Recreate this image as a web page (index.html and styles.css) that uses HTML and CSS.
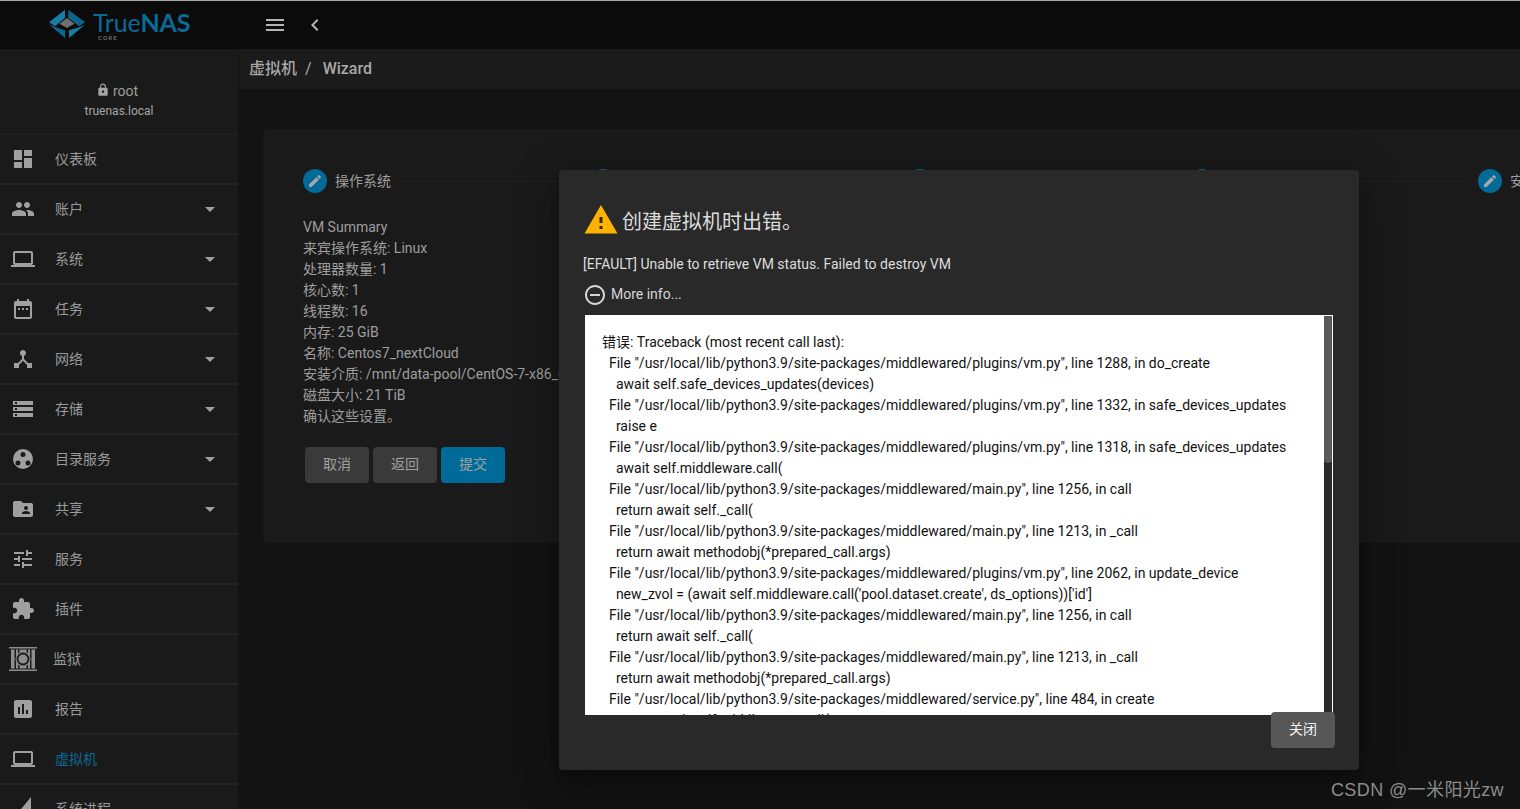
FILE: index.html
```html
<!DOCTYPE html>
<html lang="zh-CN">
<head>
<meta charset="utf-8">
<title>TrueNAS - 虚拟机 Wizard</title>
<link rel="stylesheet" href="styles.css">
</head>
<body>
<div class="app">
  <header class="topbar">
    <div class="brand">
      <svg class="brand-mark" viewBox="0 0 36 30" aria-hidden="true">
        <polygon class="seg-a" points="16,0.700 0,13.300 6,17.300 16,9"/>
        <polygon class="seg-b" points="19.300,0.700 36,13.300 30,17.300 19.300,9"/>
        <polygon class="seg-b" points="0.300,15.700 16,29 16,21.300 6,18"/>
        <polygon class="seg-a" points="36,15.700 20,29 20,21.300 31,18"/>
        <polygon class="seg-c" points="18,9 25.500,14.700 18,19 10.300,14.700"/>
      </svg>
      <div class="brand-text">
        <div class="brand-name">True<b>NAS</b></div>
        <div class="brand-sub">CORE</div>
      </div>
    </div>
    <svg class="top-icon" viewBox="0 0 24 24"><path d="M3 18h18v-2H3v2zm0-5h18v-2H3v2zm0-7v2h18V6H3z"/></svg>
    <svg class="top-icon back" viewBox="0 0 24 24"><path d="M15.410 7.410L14 6l-6 6 6 6 1.410-1.410L10.830 12z"/></svg>
  </header>
  <div class="shell">
    <nav class="sidebar">
      <div class="user">
        <div class="user-name"><svg class="lock" viewBox="0 0 24 24"><path d="M18 8h-1V6c0-2.760-2.240-5-5-5S7 3.240 7 6v2H6c-1.100 0-2 .9-2 2v10c0 1.100.9 2 2 2h12c1.100 0 2-.9 2-2V10c0-1.100-.9-2-2-2zm-6 9c-1.100 0-2-.9-2-2s.9-2 2-2 2 .9 2 2-.9 2-2 2zm3.100-9H8.900V6c0-1.710 1.390-3.100 3.100-3.100 1.710 0 3.100 1.390 3.100 3.100v2z"/></svg>root</div>
        <div class="user-host">truenas.local</div>
      </div>
      <a class="nav-item"><svg class="nav-icon" viewBox="0 0 24 24"><path d="M3 13h8V3H3v10zm0 8h8v-6H3v6zm10 0h8V11h-8v10zm0-18v6h8V3h-8z"/></svg><span>仪表板</span></a>
      <a class="nav-item has-sub"><svg class="nav-icon" viewBox="0 0 24 24"><path d="M16 11c1.660 0 2.990-1.340 2.990-3S17.660 5 16 5c-1.660 0-3 1.340-3 3s1.340 3 3 3zm-8 0c1.660 0 2.990-1.340 2.990-3S9.660 5 8 5C6.340 5 5 6.340 5 8s1.340 3 3 3zm0 2c-2.330 0-7 1.170-7 3.500V19h14v-2.500c0-2.330-4.670-3.500-7-3.500zm8 0c-.29 0-.62.02-.97.05 1.160.84 1.970 1.970 1.970 3.450V19h6v-2.500c0-2.330-4.670-3.500-7-3.500z"/></svg><span>账户</span></a>
      <a class="nav-item has-sub"><svg class="nav-icon" viewBox="0 0 24 24"><path d="M20 18c1.100 0 1.990-.9 1.990-2L22 6c0-1.100-.9-2-2-2H4c-1.100 0-2 .9-2 2v10c0 1.100.9 2 2 2H0v2h24v-2h-4zM4 6h16v10H4V6z"/></svg><span>系统</span></a>
      <a class="nav-item has-sub"><svg class="nav-icon" viewBox="0 0 24 24"><path d="M9 11H7v2h2v-2zm4 0h-2v2h2v-2zm4 0h-2v2h2v-2zm2-7h-1V2h-2v2H8V2H6v2H5c-1.110 0-1.990.9-1.990 2L3 20c0 1.100.89 2 2 2h14c1.100 0 2-.9 2-2V6c0-1.100-.9-2-2-2zm0 16H5V9h14v11z"/></svg><span>任务</span></a>
      <a class="nav-item has-sub"><svg class="nav-icon" viewBox="0 0 24 24"><path d="M17 16l-4-4V8.820C14.160 8.400 15 7.300 15 6c0-1.660-1.340-3-3-3S9 4.340 9 6c0 1.300.84 2.400 2 2.820V12l-4 4H3v5h5v-3.050l4-4.200 4 4.200V21h5v-5h-4z"/></svg><span>网络</span></a>
      <a class="nav-item has-sub"><svg class="nav-icon" viewBox="0 0 24 24"><path d="M2 20h20v-4H2v4zm2-3h2v2H4v-2zM2 4v4h20V4H2zm4 3H4V5h2v2zm-4 7h20v-4H2v4zm2-3h2v2H4v-2z"/></svg><span>存储</span></a>
      <a class="nav-item has-sub"><svg class="nav-icon" viewBox="0 0 24 24"><path fill-rule="evenodd" d="M12 2a10 10 0 1 0 0 20a10 10 0 1 0 0-20zM12 5a2.500 2.500 0 1 1 0 5a2.500 2.500 0 1 1 0-5zM7 13.500a2.500 2.500 0 1 1 0 5a2.500 2.500 0 1 1 0-5zM17 13.500a2.500 2.500 0 1 1 0 5a2.500 2.500 0 1 1 0-5z"/></svg><span>目录服务</span></a>
      <a class="nav-item has-sub"><svg class="nav-icon" viewBox="0 0 24 24"><path d="M20 6h-8l-2-2H4c-1.100 0-1.990.9-1.990 2L2 18c0 1.100.9 2 2 2h16c1.100 0 2-.9 2-2V8c0-1.100-.9-2-2-2zm-5 3c1.100 0 2 .9 2 2s-.9 2-2 2-2-.9-2-2 .9-2 2-2zm4 8h-8v-1c0-1.330 2.670-2 4-2s4 .67 4 2v1z"/></svg><span>共享</span></a>
      <a class="nav-item"><svg class="nav-icon" viewBox="0 0 24 24"><path d="M3 17v2h6v-2H3zM3 5v2h10V5H3zm10 16v-2h8v-2h-8v-2h-2v6h2zM7 9v2H3v2h4v2h2V9H7zm14 4v-2H11v2h10zm-6-4h2V7h4V5h-4V3h-2v6z"/></svg><span>服务</span></a>
      <a class="nav-item"><svg class="nav-icon" viewBox="0 0 24 24"><path d="M20.500 11H19V7c0-1.100-.9-2-2-2h-4V3.500C13 2.120 11.880 1 10.500 1S8 2.120 8 3.500V5H4c-1.100 0-1.990.9-1.990 2v3.800H3.500c1.490 0 2.700 1.210 2.700 2.700s-1.210 2.700-2.700 2.700H2V20c0 1.100.9 2 2 2h3.800v-1.500c0-1.490 1.210-2.700 2.700-2.700 1.490 0 2.700 1.210 2.700 2.700V22H17c1.100 0 2-.9 2-2v-4h1.500c1.380 0 2.500-1.120 2.500-2.500S21.880 11 20.500 11z"/></svg><span>插件</span></a>
      <a class="nav-item jail"><svg class="jail-icon" viewBox="0 0 28 24"><path class="jail-frame" d="M0 0h28v1.500H0zM0 22.500h28V24H0zM2 2.500h3.500v19H2zM7 2.500h2v19H7zM19 2.500h2v19h-2zM22.500 2.500H26v19h-3.500zM10.500 2.500h7v3h-7zM10.500 18.500h7v3h-7z"/><circle class="jail-ball" cx="14" cy="12" r="7.500"/><circle class="jail-ring" cx="14" cy="12" r="5.500"/></svg><span>监狱</span></a>
      <a class="nav-item"><svg class="nav-icon" viewBox="0 0 24 24"><path d="M19 3H5c-1.100 0-2 .9-2 2v14c0 1.100.9 2 2 2h14c1.100 0 2-.9 2-2V5c0-1.100-.9-2-2-2zM9 17H7v-7h2v7zm4 0h-2V7h2v10zm4 0h-2v-4h2v4z"/></svg><span>报告</span></a>
      <a class="nav-item active"><svg class="nav-icon" viewBox="0 0 24 24"><path d="M20 18c1.100 0 1.990-.9 1.990-2L22 6c0-1.100-.9-2-2-2H4c-1.100 0-2 .9-2 2v10c0 1.100.9 2 2 2H0v2h24v-2h-4zM4 6h16v10H4V6z"/></svg><span>虚拟机</span></a>
      <a class="nav-item"><svg class="nav-icon" viewBox="0 0 24 24"><path d="M2 22h18V0z"/></svg><span>系统进程</span></a>
    </nav>
    <main class="main">
      <div class="crumbs"><span>虚拟机</span><span class="crumb-sep">/</span><span class="crumb-last">Wizard</span></div>
      <section class="card">
        <div class="stepper">
          <div class="step"><span class="step-dot"><svg viewBox="0 0 24 24"><path d="M3 17.250V21h3.750L17.810 9.940l-3.750-3.750L3 17.250zM20.710 7.040c.39-.39.39-1.020 0-1.410l-2.340-2.340c-.39-.39-1.020-.39-1.410 0l-1.830 1.830 3.750 3.750 1.830-1.830z"/></svg></span><span class="step-label">操作系统</span><i class="step-line"></i></div>
          <div class="step"><span class="step-dot"></span><span class="step-label">CPU和内存</span><i class="step-line"></i></div>
          <div class="step"><span class="step-dot"></span><span class="step-label">磁盘</span><i class="step-line"></i></div>
          <div class="step"><span class="step-dot"></span><span class="step-label">网络接口</span><i class="step-line"></i></div>
          <div class="step"><span class="step-dot"><svg viewBox="0 0 24 24"><path d="M3 17.250V21h3.750L17.810 9.940l-3.750-3.750L3 17.250zM20.710 7.040c.39-.39.39-1.020 0-1.410l-2.340-2.340c-.39-.39-1.020-.39-1.410 0l-1.830 1.830 3.750 3.750 1.830-1.830z"/></svg></span><span class="step-label">安装介质</span></div>
        </div>
        <div class="summary">
          <div>VM Summary</div>
          <div>来宾操作系统: Linux</div>
          <div>处理器数量: 1</div>
          <div>核心数: 1</div>
          <div>线程数: 16</div>
          <div>内存: 25 GiB</div>
          <div>名称: Centos7_nextCloud</div>
          <div>安装介质: /mnt/data-pool/CentOS-7-x86_64-Minimal-2009.iso</div>
          <div>磁盘大小: 21 TiB</div>
          <div>确认这些设置。</div>
        </div>
        <div class="actions">
          <button class="btn">取消</button>
          <button class="btn">返回</button>
          <button class="btn primary">提交</button>
        </div>
      </section>
    </main>
  </div>
</div>
<div class="dialog">
  <h1 class="dialog-title"><svg class="warn" viewBox="0 0 24 24"><path d="M1 21h22L12 2 1 21zm12-3h-2v-2h2v2zm0-4h-2v-4h2v4z"/></svg><span>创建虚拟机时出错。</span></h1>
  <p class="dialog-msg">[EFAULT] Unable to retrieve VM status. Failed to destroy VM</p>
  <div class="more"><svg class="more-icon" viewBox="0 0 24 24"><path d="M7 11v2h10v-2H7zm5-9C6.480 2 2 6.480 2 12s4.480 10 10 10 10-4.480 10-10S17.520 2 12 2zm0 18c-4.410 0-8-3.590-8-8s3.590-8 8-8 8 3.590 8 8-3.590 8-8 8z"/></svg><span>More info...</span></div>
  <div class="trace">
    <pre class="trace-text">错误: Traceback (most recent call last):
  File "/usr/local/lib/python3.9/site-packages/middlewared/plugins/vm.py", line 1288, in do_create
    await self.safe_devices_updates(devices)
  File "/usr/local/lib/python3.9/site-packages/middlewared/plugins/vm.py", line 1332, in safe_devices_updates
    raise e
  File "/usr/local/lib/python3.9/site-packages/middlewared/plugins/vm.py", line 1318, in safe_devices_updates
    await self.middleware.call(
  File "/usr/local/lib/python3.9/site-packages/middlewared/main.py", line 1256, in call
    return await self._call(
  File "/usr/local/lib/python3.9/site-packages/middlewared/main.py", line 1213, in _call
    return await methodobj(*prepared_call.args)
  File "/usr/local/lib/python3.9/site-packages/middlewared/plugins/vm.py", line 2062, in update_device
    new_zvol = (await self.middleware.call('pool.dataset.create', ds_options))['id']
  File "/usr/local/lib/python3.9/site-packages/middlewared/main.py", line 1256, in call
    return await self._call(
  File "/usr/local/lib/python3.9/site-packages/middlewared/main.py", line 1213, in _call
    return await methodobj(*prepared_call.args)
  File "/usr/local/lib/python3.9/site-packages/middlewared/service.py", line 484, in create
    return await self.middleware._call(</pre>
    <div class="trace-bar"><div class="trace-thumb"></div></div>
  </div>
  <div class="dialog-actions"><button class="btn close">关闭</button></div>
</div>
<div class="watermark">CSDN @一米阳光zw</div>
</body>
</html>
```

FILE: styles.css
```css
* { box-sizing: border-box; }
html, body { margin: 0; height: 809px; overflow: hidden; }
body {
  background: #131313;
  color: #9e9e9e;
  font: 14px/21px Roboto, "Noto Sans CJK SC", sans-serif;
}
.app { display: flex; flex-direction: column; height: 809px; }

.topbar {
  flex: none;
  height: 49px;
  display: flex;
  align-items: center;
  background: #0b0b0b;
  border-top: 1px solid #a8a8a8;
}
.brand { width: 254px; padding-left: 49px; display: flex; align-items: flex-start; gap: 8px; height: 48px; }
.brand-mark { width: 36px; height: 30px; margin-top: 8px; }
.seg-a { fill: #177ea8; }
.seg-b { fill: #0b668f; }
.seg-c { fill: #6f6f6f; }
.brand-name {
  margin-top: 8px;
  font: 400 25px/26px Lato, sans-serif;
  color: #0a6a96;
  white-space: nowrap;
  letter-spacing: -.2px;
}
.brand-name b { font-weight: 700; }
.brand-sub {
  margin-left: 5px;
  font: 500 6px/5px Roboto, sans-serif;
  letter-spacing: 1.100px;
  color: #7a7a7a;
}
.top-icon { width: 24px; height: 24px; fill: #b5b5b5; margin-left: 9px; }
.top-icon.back { margin-left: 16px; }

.shell { flex: 1; display: flex; min-height: 0; }
.sidebar { flex: none; width: 238px; background: #1a1a1a; overflow: hidden; }
.user {
  height: 86px;
  padding-top: 32px;
  border-bottom: 1px solid #232323;
  text-align: center;
}
.user-name { display: flex; justify-content: center; align-items: center; line-height: 21px; }
.lock { width: 14px; height: 14px; fill: #a5a5a5; margin: 0 3px 0 -4px; position: relative; top: -2px; }
.user-host { font-size: 12px; line-height: 19px; color: #a5a5a5; }
.nav-item {
  height: 50px;
  display: flex;
  align-items: center;
  gap: 20px;
  padding: 0 23px 0 11px;
  border-bottom: 2px solid #232323;
  color: #9a9a9a;
}
.nav-item.has-sub::after {
  content: "";
  margin-left: auto;
  border-style: solid;
  border-width: 5px 5px 0;
  border-color: #a0a0a0 transparent transparent;
}
.nav-icon { flex: none; width: 24px; height: 24px; fill: #a0a0a0; }
.nav-item.jail { padding-left: 9px; gap: 16px; }
.jail-icon { flex: none; width: 28px; height: 24px; }
.jail-frame, .jail-ball { fill: #8e8e8e; }
.jail-ring { fill: #8e8e8e; stroke: #1a1a1a; stroke-width: 1.800; }
.nav-item.active { color: #0a6a96; }

.main { flex: 1; min-width: 0; }
.crumbs {
  height: 40px;
  margin-left: 1px;
  padding: 0 0 2px 10px;
  display: flex;
  align-items: center;
  background: #1b1b1b;
  font-size: 16px;
  font-weight: 500;
  color: #a8a8a8;
}
.crumb-sep { margin: 0 11px 0 8px; font-weight: 400; }
.card {
  margin: 40px 0 0 25px;
  height: 414px;
  padding: 40px 0 0 40px;
  background: #1a1a1a;
  border-radius: 6px 0 0 6px;
}
.stepper { display: grid; grid-template-columns: 288px 317px 282px 288px 200px; }
.step { display: flex; align-items: center; height: 24px; gap: 8px; }
.step-dot {
  flex: none;
  width: 24px;
  height: 24px;
  border-radius: 50%;
  background: #006b99;
  display: flex;
  align-items: center;
  justify-content: center;
}
.step-dot svg { width: 16px; height: 16px; fill: #a8a8a8; }
.step-label { white-space: nowrap; }
.step-line { flex: 1; height: 1px; background: #202020; margin-right: 8px; }
.summary { margin-top: 24px; width: 256px; white-space: nowrap; line-height: 21px; overflow: hidden; }
.actions { display: flex; gap: 4px; margin: 20px 0 0 2px; }
.btn {
  width: 64px;
  height: 36px;
  padding: 0 0 2px;
  border: 0;
  border-radius: 4px;
  background: #3a3a3a;
  color: #a0a0a0;
  font: inherit;
}
.btn.primary { background: #006b99; }

.dialog {
  position: absolute;
  left: 559px;
  top: 170px;
  width: 800px;
  height: 600px;
  padding: 32px 24px 0;
  background: #292929;
  border-radius: 4px;
  box-shadow: 0 11px 15px -7px rgba(0,0,0,.2), 0 24px 38px 3px rgba(0,0,0,.14), 0 9px 46px 8px rgba(0,0,0,.12);
}
.dialog-title {
  margin: 0;
  height: 36px;
  display: flex;
  align-items: center;
  gap: 3px;
  font-size: 20px;
  font-weight: 400;
  color: #dcdcdc;
}
.dialog-title span { padding-top: 4px; }
.warn { width: 36px; height: 36px; fill: #ffb300; }
.dialog-msg { margin: 16px 0 0; color: #dcdcdc; }
.more { margin-top: 8px; height: 24px; display: flex; align-items: center; gap: 4px; color: #d6d6d6; }
.more span { padding-bottom: 2px; }
.more-icon { width: 24px; height: 24px; fill: #d6d6d6; }
.trace {
  margin: 8px 0 0 2px;
  width: 748px;
  height: 400px;
  display: flex;
  background: #fff;
  border: 1px solid #fff;
  border-bottom: 0;
  overflow: hidden;
}
.trace-text {
  flex: 1;
  min-width: 0;
  margin: 0;
  padding: 16px 0 0 16px;
  font: inherit;
  color: #111;
  white-space: pre;
  overflow: hidden;
}
.trace-bar { flex: none; width: 8px; background: #2b2b2b; }
.trace-thumb { height: 147px; background: #5a5a5a; border-radius: 0 0 4px 4px; }
.dialog-actions { display: flex; justify-content: flex-end; margin-top: -3px; position: relative; }
.btn.close { background: #575757; color: #f2f2f2; }

.watermark {
  position: absolute;
  right: 16px;
  bottom: 7px;
  font: 18px/24px "Liberation Sans", "Noto Sans CJK SC", sans-serif;
  letter-spacing: .4px;
  color: #8c8c8c;
}
```
